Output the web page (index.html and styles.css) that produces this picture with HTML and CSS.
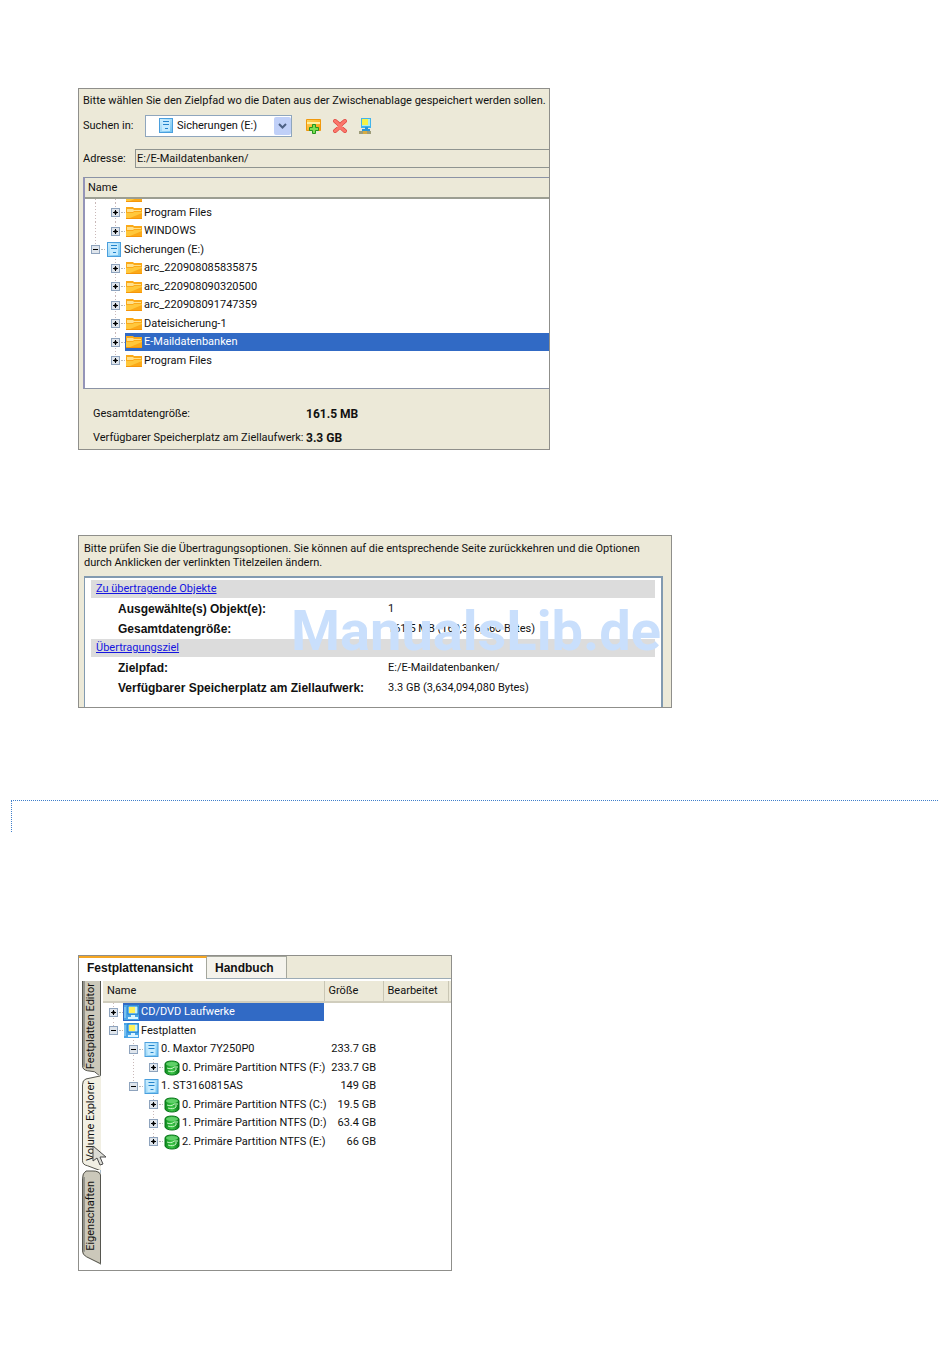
FILE: index.html
```
<!DOCTYPE html>
<html lang="de">
<head>
    <meta charset="UTF-8">
    <meta name="viewport" content="width=device-width, initial-scale=1.0">
    <title>Handbuch</title>
    <link rel="stylesheet" href="styles.css">
</head>
<body>
    <!-- Shared icons -->
    <svg class="sprite" aria-hidden="true">
        <defs>
            <linearGradient id="gFolder" x1="0" y1="0" x2="1" y2="1">
                <stop offset="0" stop-color="#ffd75a"/>
                <stop offset="1" stop-color="#f79a0c"/>
            </linearGradient>
            <linearGradient id="gDrive" x1="0" y1="0" x2="1" y2="1">
                <stop offset="0" stop-color="#d4f2ff"/>
                <stop offset="1" stop-color="#6cc0f0"/>
            </linearGradient>
            <linearGradient id="gVolume" x1="0" y1="0" x2="1" y2="0">
                <stop offset="0" stop-color="#0c8a1c"/>
                <stop offset="0.5" stop-color="#3fc94a"/>
                <stop offset="1" stop-color="#087a18"/>
            </linearGradient>
        </defs>
        <symbol id="plus" viewBox="0 0 9 9">
            <rect x="0.5" y="0.5" width="8" height="8" fill="#dfe5ec" stroke="#8ea3bd"/>
            <path d="M2 4h5v1H2zM4 2h1v5H4z" fill="#000"/>
            <path d="M3 3h3v3H3z" fill="#000" opacity="0.5"/>
        </symbol>
        <symbol id="minus" viewBox="0 0 9 9">
            <rect x="0.5" y="0.5" width="8" height="8" fill="#dfe5ec" stroke="#8ea3bd"/>
            <path d="M2 4h5v1H2z" fill="#000"/>
        </symbol>
        <symbol id="folder" viewBox="0 0 16 14">
            <path d="M0 1h7l1 1h8v11H0z" fill="#fba918"/>
            <path d="M1 3h6l1 1h7v1H8L7 6H1z" fill="#ffe08a"/>
            <path d="M0 7h7l1-1h8v1L4 12H0z" fill="#ffc83c"/>
            <path d="M0 12h16v1H0z" fill="#f5960a"/>
        </symbol>
        <symbol id="drive" viewBox="0 0 14 15">
            <rect x="0.5" y="0.5" width="13" height="14" fill="url(#gDrive)" stroke="#4a9fdd"/>
            <rect x="3" y="2" width="8" height="11" fill="#c5ebff"/>
            <path d="M4 3.500h6M4 6.500h6M6 10.500h3" stroke="#2484cc"/>
        </symbol>
        <symbol id="computer" viewBox="0 0 15 15">
            <rect width="15" height="15" fill="#49a5e8"/>
            <rect x="4" y="1" width="10" height="8" fill="#c7f2fb" stroke="#167ac8"/>
            <rect x="5" y="2" width="6" height="6" fill="#fff15a"/>
            <path d="M7 10h4v2h3v2H4v-2h3z" fill="#d9f4ff"/>
            <path d="M1 2v11" stroke="#a9dcf8"/>
        </symbol>
        <symbol id="volume" viewBox="0 0 16 16">
            <path d="M1 4C1 0 14 0 15 4v8c-1 4-13 4-14 0z" fill="url(#gVolume)" stroke="#08751a"/>
            <ellipse cx="8" cy="4" rx="6" ry="2" fill="#5fd068"/>
            <path d="M3 8c3 1 5 1 7-1h4M4 11c3 1 6 1 8-1V8" fill="none" stroke="#c7f8c5"/>
        </symbol>
        <symbol id="newfolder" viewBox="0 0 17 17">
            <path d="M1.500 1.500h14v11h-14z" fill="url(#gFolder)" stroke="#f0980c"/>
            <path d="M2 4h13v2H2z" fill="#fff0a0"/>
            <path d="M7.500 6.500h3v3h3v3h-3v3h-3v-3h-3v-3h3z" fill="#7be052" stroke="#23951f"/>
        </symbol>
        <symbol id="delete" viewBox="0 0 16 16">
            <path d="M3 3q3 2 5 5t5 5M13 3q-3 2-5 5t-5 5" fill="none" stroke="#d83b35" stroke-width="4" stroke-linecap="round"/>
            <path d="M3 3q3 2 5 5t5 5M13 3q-3 2-5 5t-5 5" fill="none" stroke="#fb776b" stroke-width="3" stroke-linecap="round"/>
        </symbol>
        <symbol id="network" viewBox="0 0 14 18">
            <path d="M3 1h10v10H3z" fill="#42b4ea"/>
            <path d="M4 2h8v7H4z" fill="#a8edf0"/>
            <path d="M4 2h6v6H4z" fill="#f6f345"/>
            <path d="M7 10h3v3H7zM4 12h8v2H4z" fill="#2996d8"/>
            <path d="M1 14h12v3H1z" fill="#9d9c79"/>
            <path d="M5 14h4v3H5z" fill="#d7ac43"/>
        </symbol>
    </svg>

    <main>
        <!-- Target path -->
        <section class="dialog path-dialog">
            <p class="intro">Bitte wählen Sie den Zielpfad wo die Daten aus der Zwischenablage gespeichert werden sollen.</p>
            <div class="search-row">
                <label for="drive-select">Suchen in:</label>
                <div class="combo">
                    <svg class="combo-icon" width="14" height="15"><use href="#drive"/></svg>
                    <select id="drive-select">
                        <option>Sicherungen (E:)</option>
                    </select>
                    <svg class="combo-arrow" width="17" height="18" viewBox="0 0 17 18">
                        <rect width="17" height="18" rx="2" fill="#c0d0f8"/>
                        <path d="M5 7l3.500 3.500L12 7" fill="none" stroke="#4d6185" stroke-width="2"/>
                    </svg>
                </div>
                <div class="tools">
                    <button type="button" aria-label="Neuer Ordner"><svg width="17" height="17"><use href="#newfolder"/></svg></button>
                    <button type="button" aria-label="Löschen"><svg width="16" height="16"><use href="#delete"/></svg></button>
                    <button type="button" aria-label="Netzlaufwerk verbinden"><svg width="14" height="18"><use href="#network"/></svg></button>
                </div>
            </div>
            <div class="address-row">
                <label for="address">Adresse:</label>
                <input id="address" type="text" value="E:/E-Maildatenbanken/" readonly>
            </div>
            <div class="list">
                <div class="list-head">Name</div>
                <ul class="tree">
                    <li class="cut"><span class="guide"></span><span class="guide"></span><svg class="icon" width="16" height="14"><use href="#folder"/></svg></li>
                    <li><span class="guide"></span><span class="node"><button type="button" aria-label="Öffnen"><svg width="9" height="9"><use href="#plus"/></svg></button></span><svg class="icon" width="16" height="14"><use href="#folder"/></svg><span>Program Files</span></li>
                    <li><span class="guide"></span><span class="node last"><button type="button" aria-label="Öffnen"><svg width="9" height="9"><use href="#plus"/></svg></button></span><svg class="icon" width="16" height="14"><use href="#folder"/></svg><span>WINDOWS</span></li>
                    <li class="root"><span class="node last"><button type="button" aria-label="Schließen"><svg width="9" height="9"><use href="#minus"/></svg></button></span><svg class="icon" width="14" height="15"><use href="#drive"/></svg><span>Sicherungen (E:)</span></li>
                    <li><span class="space"></span><span class="node"><button type="button" aria-label="Öffnen"><svg width="9" height="9"><use href="#plus"/></svg></button></span><svg class="icon" width="16" height="14"><use href="#folder"/></svg><span>arc_220908085835875</span></li>
                    <li><span class="space"></span><span class="node"><button type="button" aria-label="Öffnen"><svg width="9" height="9"><use href="#plus"/></svg></button></span><svg class="icon" width="16" height="14"><use href="#folder"/></svg><span>arc_220908090320500</span></li>
                    <li><span class="space"></span><span class="node"><button type="button" aria-label="Öffnen"><svg width="9" height="9"><use href="#plus"/></svg></button></span><svg class="icon" width="16" height="14"><use href="#folder"/></svg><span>arc_220908091747359</span></li>
                    <li><span class="space"></span><span class="node"><button type="button" aria-label="Öffnen"><svg width="9" height="9"><use href="#plus"/></svg></button></span><svg class="icon" width="16" height="14"><use href="#folder"/></svg><span>Dateisicherung-1</span></li>
                    <li><span class="space"></span><span class="node"><button type="button" aria-label="Öffnen"><svg width="9" height="9"><use href="#plus"/></svg></button></span><span class="selected"><svg class="icon" width="16" height="14"><use href="#folder"/></svg><span>E-Maildatenbanken</span></span></li>
                    <li><span class="space"></span><span class="node last"><button type="button" aria-label="Öffnen"><svg width="9" height="9"><use href="#plus"/></svg></button></span><svg class="icon" width="16" height="14"><use href="#folder"/></svg><span>Program Files</span></li>
                </ul>
            </div>
            <dl class="sizes">
                <dt>Gesamtdatengröße:</dt>
                <dd>161.5 MB</dd>
                <dt>Verfügbarer Speicherplatz am Ziellaufwerk:</dt>
                <dd>3.3 GB</dd>
            </dl>
        </section>

        <!-- Transfer summary -->
        <section class="dialog summary-dialog">
            <p class="intro">Bitte prüfen Sie die Übertragungsoptionen. Sie können auf die entsprechende Seite zurückkehren und die Optionen durch Anklicken der verlinkten Titelzeilen ändern.</p>
            <div class="summary">
                <h2><a href="#objekte">Zu übertragende Objekte</a></h2>
                <dl>
                    <dt>Ausgewählte(s) Objekt(e):</dt>
                    <dd>1</dd>
                    <dt>Gesamtdatengröße:</dt>
                    <dd>161.5 MB (169,346,560 Bytes)</dd>
                </dl>
                <h2><a href="#ziel">Übertragungsziel</a></h2>
                <dl>
                    <dt>Zielpfad:</dt>
                    <dd>E:/E-Maildatenbanken/</dd>
                    <dt>Verfügbarer Speicherplatz am Ziellaufwerk:</dt>
                    <dd>3.3 GB (3,634,094,080 Bytes)</dd>
                </dl>
            </div>
            <div class="watermark">ManualsLib.de</div>
        </section>

        <div class="page-break"></div>

        <!-- Volume explorer -->
        <section class="explorer">
            <div class="tabs">
                <button type="button" class="tab active">Festplattenansicht</button>
                <button type="button" class="tab">Handbuch</button>
            </div>
            <div class="explorer-body">
                <div class="side-tabs">
                    <button type="button">
                        <svg viewBox="0 0 20 96" preserveAspectRatio="none"><path d="M1 0v86q0 4 5 5l8 1 5 4V0z" fill="#cbc8ba"/><path d="M1.500 0v86q0 4 5 5l7 1 5 4M19.500 0v96" fill="none" stroke="#55554e"/><path d="M3 0v87" stroke="#93938c" stroke-width="2"/></svg>
                        <span>Festplatten Editor</span>
                    </button>
                    <button type="button" class="current">
                        <svg viewBox="0 0 20 96" preserveAspectRatio="none"><path d="M20 0L5 3Q1 4 1 9v77q0 4 5 5l14 5z" fill="#f1efe3"/><path d="M19 0L5 3Q1.500 4 1.500 9v77q0 4 5 5l13 5" fill="none" stroke="#55554e"/></svg>
                        <span>Volume Explorer</span>
                    </button>
                    <button type="button">
                        <svg viewBox="0 0 20 96" preserveAspectRatio="none"><path d="M20 4Q18 0 12 1H5Q1 3 1 9v73q0 4 4 6l15 8z" fill="#cbc8ba"/><path d="M19.500 95V5Q18 1 12 1H5Q1.500 3 1.500 9v73q0 4 4 6l14 7" fill="none" stroke="#55554e"/><path d="M3 7v76" stroke="#93938c" stroke-width="2"/></svg>
                        <span>Eigenschaften</span>
                    </button>
                    <svg class="pointer" width="16" height="22" viewBox="0 0 16 22"><path d="M1 1v15l4-3 3 7 3-1-3-7h6z" fill="#dcdcd6" stroke="#4c4c4c"/></svg>
                </div>
                <table>
                    <thead>
                        <tr><th class="name">Name</th><th class="size">Größe</th><th class="edited">Bearbeitet</th><th class="rest"></th></tr>
                    </thead>
                    <tbody>
                        <tr>
                            <td><div class="cell"><span class="node"><button type="button" aria-label="Öffnen"><svg width="9" height="9"><use href="#plus"/></svg></button></span><span class="selected"><svg class="icon" width="15" height="15"><use href="#computer"/></svg><span>CD/DVD Laufwerke</span></span></div></td>
                            <td></td><td></td><td></td>
                        </tr>
                        <tr>
                            <td><div class="cell"><span class="node last"><button type="button" aria-label="Schließen"><svg width="9" height="9"><use href="#minus"/></svg></button></span><svg class="icon" width="15" height="15"><use href="#computer"/></svg><span>Festplatten</span></div></td>
                            <td></td><td></td><td></td>
                        </tr>
                        <tr>
                            <td><div class="cell"><span class="space"></span><span class="node"><button type="button" aria-label="Schließen"><svg width="9" height="9"><use href="#minus"/></svg></button></span><svg class="icon" width="15" height="15"><use href="#drive"/></svg><span>0. Maxtor 7Y250P0</span></div></td>
                            <td>233.7 GB</td><td></td><td></td>
                        </tr>
                        <tr>
                            <td><div class="cell"><span class="space"></span><span class="guide"></span><span class="node last"><button type="button" aria-label="Öffnen"><svg width="9" height="9"><use href="#plus"/></svg></button></span><svg class="icon" width="16" height="16"><use href="#volume"/></svg><span>0. Primäre Partition NTFS (F:)</span></div></td>
                            <td>233.7 GB</td><td></td><td></td>
                        </tr>
                        <tr>
                            <td><div class="cell"><span class="space"></span><span class="node last"><button type="button" aria-label="Schließen"><svg width="9" height="9"><use href="#minus"/></svg></button></span><svg class="icon" width="15" height="15"><use href="#drive"/></svg><span>1. ST3160815AS</span></div></td>
                            <td>149 GB</td><td></td><td></td>
                        </tr>
                        <tr>
                            <td><div class="cell"><span class="space"></span><span class="space"></span><span class="node"><button type="button" aria-label="Öffnen"><svg width="9" height="9"><use href="#plus"/></svg></button></span><svg class="icon" width="16" height="16"><use href="#volume"/></svg><span>0. Primäre Partition NTFS (C:)</span></div></td>
                            <td>19.5 GB</td><td></td><td></td>
                        </tr>
                        <tr>
                            <td><div class="cell"><span class="space"></span><span class="space"></span><span class="node"><button type="button" aria-label="Öffnen"><svg width="9" height="9"><use href="#plus"/></svg></button></span><svg class="icon" width="16" height="16"><use href="#volume"/></svg><span>1. Primäre Partition NTFS (D:)</span></div></td>
                            <td>63.4 GB</td><td></td><td></td>
                        </tr>
                        <tr>
                            <td><div class="cell"><span class="space"></span><span class="space"></span><span class="node last"><button type="button" aria-label="Öffnen"><svg width="9" height="9"><use href="#plus"/></svg></button></span><svg class="icon" width="16" height="16"><use href="#volume"/></svg><span>2. Primäre Partition NTFS (E:)</span></div></td>
                            <td>66 GB</td><td></td><td></td>
                        </tr>
                    </tbody>
                </table>
            </div>
        </section>
    </main>
</body>
</html>
```
FILE: styles.css
```
* {
    box-sizing: border-box;
}

body {
    margin: 0;
    background: #fff;
    color: #111;
    font-family: Roboto, "Liberation Sans", Arial, sans-serif;
    font-size: 11px;
    line-height: 14px;
}

main {
    padding: 88px 12px 98px 11px;
}

.sprite {
    position: absolute;
    width: 0;
    height: 0;
}

svg {
    display: block;
    flex: none;
}

button,
input,
select {
    font: inherit;
    color: inherit;
}

button {
    display: block;
    padding: 0;
    border: none;
    background: none;
}

p,
dl,
dd,
ul,
h2 {
    margin: 0;
    padding: 0;
}

.dialog {
    position: relative;
    margin-left: 67px;
    background: #ece9d8;
    border: 1px solid #8f8f8b;
}

/* Target path */
.path-dialog {
    max-width: 472px;
    padding: 5px 0 4px 4px;
}

.search-row {
    display: flex;
    align-items: center;
    height: 22px;
    margin-top: 7px;
}

.search-row label {
    width: 62px;
}

.combo {
    position: relative;
    width: 147px;
}

.combo select {
    display: block;
    width: 100%;
    height: 22px;
    padding: 0 20px 0 31px;
    appearance: none;
    background: #fff;
    border: 1px solid #8fa6bd;
    border-radius: 0;
}

.combo-icon {
    position: absolute;
    left: 14px;
    top: 3px;
}

.combo-arrow {
    position: absolute;
    right: 1px;
    top: 2px;
}

.tools {
    display: flex;
    align-items: center;
    gap: 10px;
    margin-left: 13px;
}

.address-row {
    display: flex;
    align-items: center;
    margin-top: 12px;
}

.address-row label {
    width: 52px;
}

.address-row input {
    flex: 1;
    min-width: 0;
    height: 19px;
    padding: 0 1px;
    background: #ece9d8;
    border: 1px solid #8f9490;
    border-right: none;
    outline: none;
}

.list {
    margin-top: 9px;
    background: #fff;
    border: 1px solid #8b93a5;
    border-left: 2px solid #9494b8;
    border-right: none;
    min-height: 212px;
}

.list-head {
    height: 21px;
    padding: 3px 3px;
    background: #ece9d8;
    border-bottom: 2px solid #9c9e92;
}

.tree {
    list-style: none;
}

.tree li {
    display: flex;
    align-items: center;
    height: 18px;
}

.tree li:nth-child(even) {
    height: 19px;
}

.tree li.cut {
    height: 4px;
    align-items: flex-end;
    overflow: hidden;
}

.guide,
.space,
.node {
    flex: none;
    align-self: stretch;
    width: 20px;
}

/* Dotted connector lines of the tree */
.guide,
.node {
    background: repeating-linear-gradient(#c9b8b8 0 1px, transparent 1px 3px) 10px 0 / 1px 100% no-repeat;
}

.node {
    display: flex;
    align-items: center;
    justify-content: center;
    position: relative;
}

.node.last {
    background-size: 1px 50%;
}

.node::after {
    content: "";
    position: absolute;
    right: 0;
    width: 4px;
    border-top: 1px dotted #b8b8b8;
}

.icon {
    margin: 0 2px 0 1px;
}

.root .icon {
    margin: 0 3px 0 2px;
}

.selected {
    display: flex;
    align-items: center;
    flex: 1;
    align-self: stretch;
    background: #316ac5;
    color: #fff;
}

.sizes {
    display: grid;
    grid-template-columns: 213px 1fr;
    row-gap: 10px;
    margin: 18px 0 0 10px;
}

.sizes dt {
    white-space: nowrap;
}

.sizes dd {
    font-size: 12px;
    font-weight: bold;
}

/* Transfer summary */
.summary-dialog {
    max-width: 594px;
    margin-top: 85px;
    padding: 6px 8px 0 5px;
}

.summary-dialog .intro {
    padding-right: 16px;
}

.summary {
    margin-top: 6px;
    padding: 2px 6px 9px;
    background: #fff;
    border: 2px solid #829ab0;
    border-width: 2px 2px 0 1px;
}

.summary h2 {
    height: 18px;
    padding: 2px 5px;
    background: #dcdcdc;
    font-size: 11px;
    font-weight: normal;
}

.summary a {
    color: #1515e0;
}

.summary dl {
    display: grid;
    grid-template-columns: 270px 1fr;
    padding: 1px 0 0 27px;
    line-height: 20px;
}

.summary dt {
    font-family: "Liberation Sans", Arial, sans-serif;
    font-size: 12px;
    font-weight: bold;
    white-space: nowrap;
}

.watermark {
    position: absolute;
    right: 10px;
    top: 63px;
    color: #c9dffc;
    font-size: 56px;
    font-weight: bold;
    line-height: 64px;
}

.page-break {
    height: 32px;
    margin-top: 92px;
    border-top: 1px dotted #3f7fcb;
    border-left: 1px dotted #3f7fcb;
}

/* Volume explorer */
.explorer {
    max-width: 374px;
    margin: 123px 0 0 67px;
    background: #fff;
    border: 1px solid #8f8f8b;
}

.tabs {
    display: flex;
    height: 23px;
    background: #ece9d8;
    border-bottom: 1px solid #9cabb5;
}

.tab {
    height: 22px;
    padding: 0 12px 0 8px;
    background: #f4f3ec;
    border: 1px solid #a5a79c;
    border-left: none;
    border-bottom: none;
    font-family: "Liberation Sans", Arial, sans-serif;
    font-size: 12px;
    font-weight: bold;
}

.tab.active {
    height: 23px;
    padding: 0 13px 2px 8px;
    background: #fff;
    border-top: 2px solid #f5a623;
}

.explorer-body {
    display: flex;
    padding-top: 2px;
    min-height: 291px;
}

.side-tabs {
    position: relative;
    width: 22px;
    margin: 0 2px 5px 0;
    padding-left: 2px;
    display: flex;
    flex-direction: column;
    border-right: 1px solid #a9bccb;
}

.side-tabs button {
    flex: 1;
    position: relative;
    width: 20px;
}

.side-tabs button svg {
    position: absolute;
    left: 0;
    top: 0;
    width: 100%;
    height: 100%;
}

.side-tabs span {
    position: relative;
    writing-mode: vertical-rl;
    transform: rotate(180deg);
    white-space: nowrap;
}

.pointer {
    position: absolute;
    left: 13px;
    top: 164px;
}

.explorer table {
    flex: 1;
    width: 100%;
    align-self: flex-start;
    table-layout: fixed;
    border-collapse: collapse;
}

.explorer th {
    height: 21px;
    padding: 0 4px;
    background: #ece9d8;
    border-bottom: 2px solid #d0cdbd;
    border-right: 1px solid #c9c6b4;
    font-weight: normal;
    text-align: left;
}

.explorer th.rest {
    border-right: none;
}

.name {
    width: 221px;
}

.size {
    width: 59px;
}

.edited {
    width: 65px;
}

.explorer td {
    height: 18px;
    padding: 0;
    text-align: right;
}

.explorer tr:nth-child(even) td {
    height: 19px;
}

.explorer td:nth-child(2) {
    padding-right: 7px;
    white-space: nowrap;
}

.cell {
    display: flex;
    align-items: center;
    height: 18px;
    white-space: nowrap;
}
```
